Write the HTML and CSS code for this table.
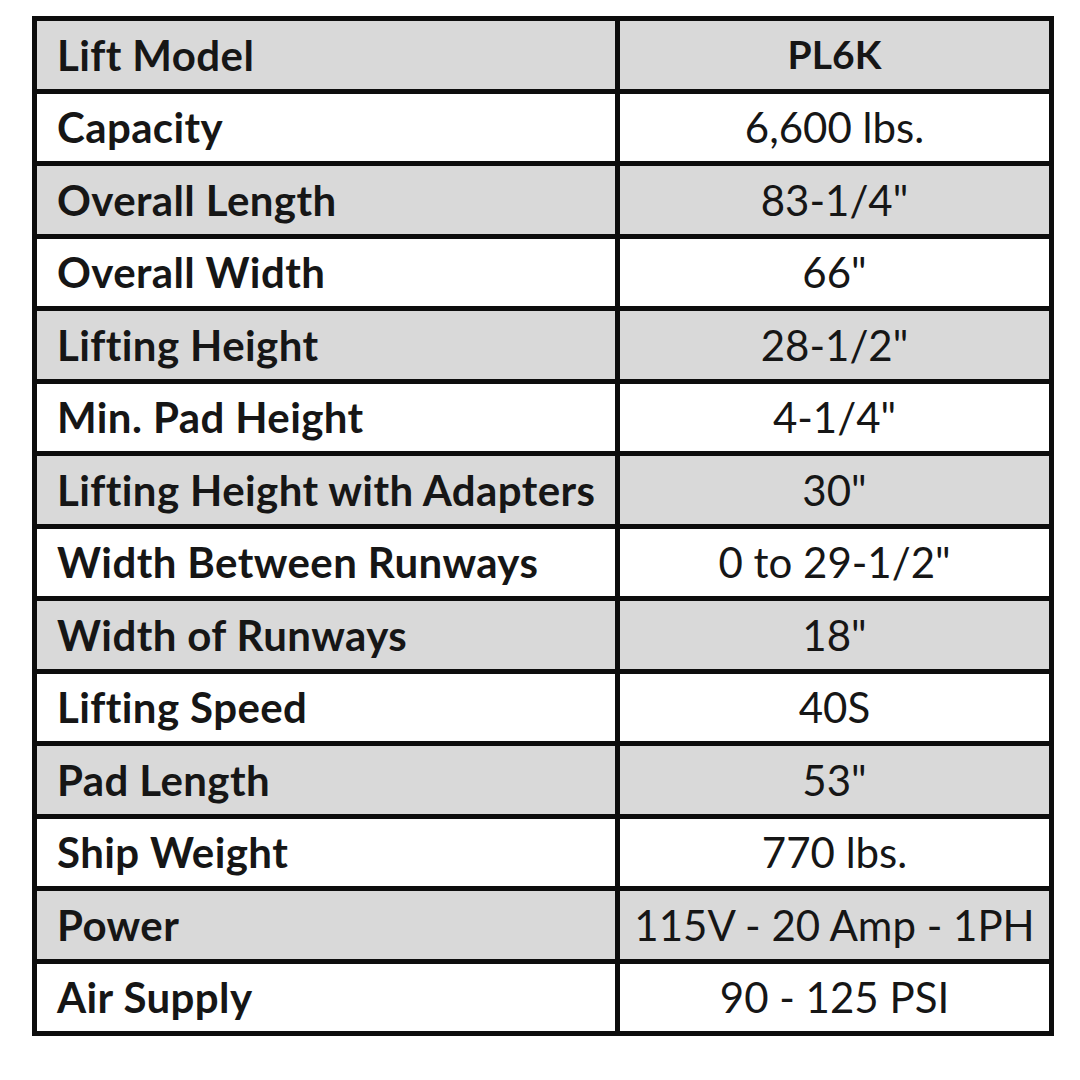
FILE: index.html
```html
<!DOCTYPE html>
<html lang="en">
<head>
<meta charset="utf-8">
<title>PL6K Lift Specifications</title>
<link rel="stylesheet" href="styles.css">
</head>
<body>
<table class="spec">
  <tbody>
    <tr class="shade"><th class="label">Lift Model</th><th class="value">PL6K</th></tr>
    <tr><td class="label">Capacity</td><td class="value">6,600 lbs.</td></tr>
    <tr class="shade"><td class="label">Overall Length</td><td class="value">83-1/4"</td></tr>
    <tr><td class="label">Overall Width</td><td class="value">66"</td></tr>
    <tr class="shade"><td class="label">Lifting Height</td><td class="value">28-1/2"</td></tr>
    <tr><td class="label">Min. Pad Height</td><td class="value">4-1/4"</td></tr>
    <tr class="shade"><td class="label">Lifting Height with Adapters</td><td class="value">30"</td></tr>
    <tr><td class="label">Width Between Runways</td><td class="value">0 to 29-1/2"</td></tr>
    <tr class="shade"><td class="label">Width of Runways</td><td class="value">18"</td></tr>
    <tr><td class="label">Lifting Speed</td><td class="value">40S</td></tr>
    <tr class="shade"><td class="label">Pad Length</td><td class="value">53"</td></tr>
    <tr><td class="label">Ship Weight</td><td class="value">770 lbs.</td></tr>
    <tr class="shade"><td class="label">Power</td><td class="value">115V - 20 Amp - 1PH</td></tr>
    <tr><td class="label">Air Supply</td><td class="value">90 - 125 PSI</td></tr>
  </tbody>
</table>
</body>
</html>
```
FILE: styles.css
```css
html, body {
  margin: 0;
  padding: 0;
  background: #ffffff;
}
body {
  padding: 16px 0 0 32px;
  font-family: Lato, "Open Sans", "Liberation Sans", sans-serif;
  color: #161616;
}
.spec {
  border-collapse: separate;
  border-spacing: 5px;
  background: #0d0d0d;
  table-layout: fixed;
  width: 1022px;
}
.spec td, .spec th {
  height: 67.5px;
  padding: 0;
  background: #ffffff;
  font-size: 42px;
  line-height: 1;
  vertical-align: middle;
  white-space: nowrap;
}
.spec tr.shade td, .spec tr.shade th {
  background: #d9d9d9;
}
.spec .label {
  width: 578px;
  text-align: left;
  padding-left: 20px;
  font-weight: 700;
  letter-spacing: 0.4px;
  box-sizing: border-box;
}
.spec .value {
  width: 429px;
  text-align: center;
  font-weight: 400;
}
.spec th.value {
  font-weight: 700;
  font-size: 39px;
}
```
